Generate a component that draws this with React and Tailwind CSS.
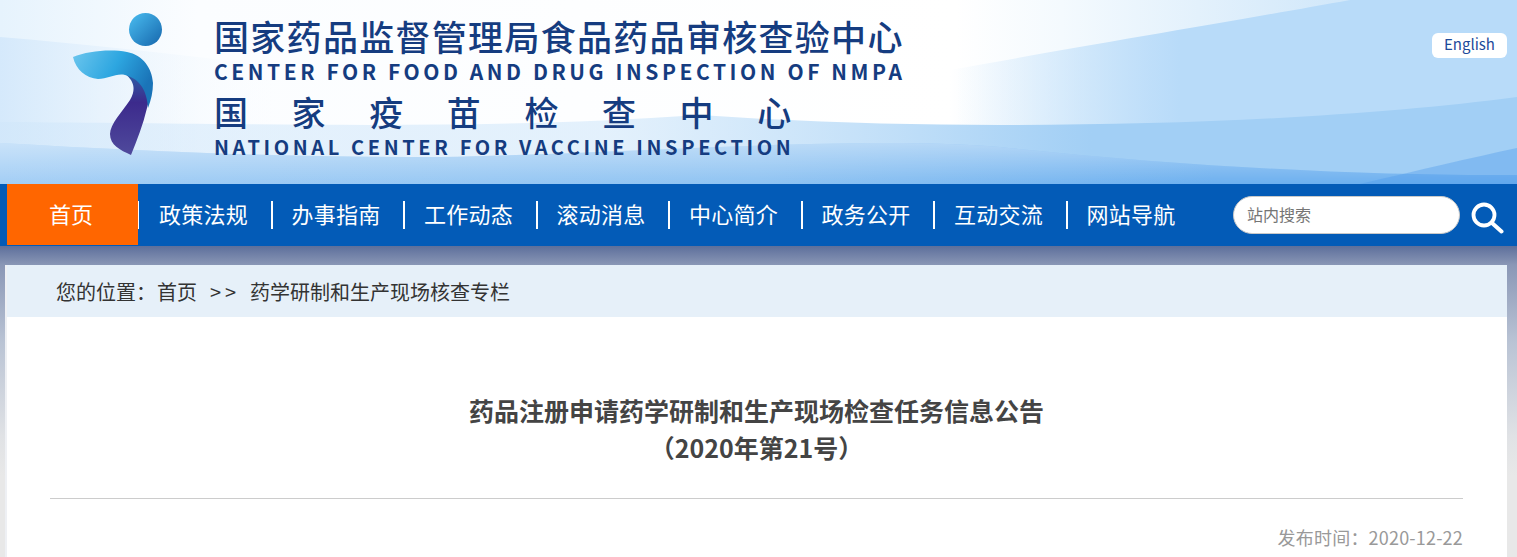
import React from 'react';

const navItems = ['政策法规', '办事指南', '工作动态', '滚动消息', '中心简介', '政务公开', '互动交流', '网站导航'];

const HeaderWaves = () => (
    <svg className="absolute inset-0 h-full w-full" viewBox="0 0 1517 184" preserveAspectRatio="none">
        <defs>
            <linearGradient id="base" x1="0" y1="0" x2="1" y2="0">
                <stop offset="0" stopColor="#e6f3fd" />
                <stop offset="0.13" stopColor="#fbfdff" />
                <stop offset="0.63" stopColor="#ffffff" />
                <stop offset="0.7" stopColor="#f4fafe" />
                <stop offset="0.88" stopColor="#d2e8fa" />
                <stop offset="1" stopColor="#cbe4f9" />
            </linearGradient>
            <linearGradient id="skyRight" gradientUnits="userSpaceOnUse" x1="950" y1="0" x2="1180" y2="0">
                <stop offset="0" stopColor="#b8dbf9" stopOpacity="0" />
                <stop offset="1" stopColor="#b8dbf9" />
            </linearGradient>
            <linearGradient id="leftBand" x1="0" y1="0" x2="1" y2="0">
                <stop offset="0" stopColor="#d3e8fb" />
                <stop offset="0.4" stopColor="#ffffff" stopOpacity="0" />
            </linearGradient>
            <linearGradient id="midBand" x1="0" y1="0" x2="1" y2="0">
                <stop offset="0" stopColor="#cfe6fa" stopOpacity="0.5" />
                <stop offset="0.4" stopColor="#d8ebfb" stopOpacity="0.7" />
                <stop offset="0.72" stopColor="#a2cff5" />
                <stop offset="1" stopColor="#a2cff5" />
            </linearGradient>
            <linearGradient id="lowBand" x1="0" y1="0" x2="1" y2="0">
                <stop offset="0" stopColor="#a3cef5" />
                <stop offset="0.5" stopColor="#8fc3f2" />
                <stop offset="0.8" stopColor="#6db0ef" />
                <stop offset="1" stopColor="#6db0ef" />
            </linearGradient>
            <linearGradient id="lowFade" gradientUnits="userSpaceOnUse" x1="0" y1="135" x2="0" y2="184">
                <stop offset="0" stopColor="#ffffff" stopOpacity="0.5" />
                <stop offset="1" stopColor="#ffffff" stopOpacity="0" />
            </linearGradient>
        </defs>
        <rect width="1517" height="184" fill="url(#base)" />
        <path d="M0 37 C160 50 340 75 560 100 L760 184 L0 184 Z" fill="url(#leftBand)" opacity="0.9" />
        <path d="M950 70 C1060 50 1240 20 1350 0 L1517 0 L1517 184 L950 184 Z" fill="url(#skyRight)" />
        <path d="M0 122 C300 124 480 130 700 115 C800 122 900 125 1000 125 C1200 125 1380 115 1517 97 L1517 184 L0 184 Z" fill="url(#midBand)" />
        <path d="M0 143 C160 152 300 158 440 157 C620 154 860 135 1000 147 C1200 168 1380 176 1517 175 L1517 184 L0 184 Z" fill="url(#lowBand)" />
        <path d="M0 143 C160 152 300 158 440 157 C620 154 860 135 1000 147 C1200 168 1380 176 1517 175 L1517 184 L0 184 Z" fill="url(#lowFade)" />
        <path d="M1360 184 C1420 170 1470 158 1517 148 L1517 184 Z" fill="#4f9bea" opacity="0.4" />
    </svg>
);

const Logo = () => (
    <svg className="mt-[13px] shrink-0" width="92" height="144" viewBox="72 13 92 144">
        <defs>
            <linearGradient id="ball" x1="0.1" y1="0.1" x2="0.9" y2="0.9">
                <stop offset="0" stopColor="#45b5ea" />
                <stop offset="1" stopColor="#1b6fb3" />
            </linearGradient>
            <linearGradient id="ribbon" x1="0" y1="0" x2="1" y2="0.4">
                <stop offset="0" stopColor="#6cc6ee" />
                <stop offset="0.55" stopColor="#2da6e0" />
                <stop offset="1" stopColor="#1a74b8" />
            </linearGradient>
            <linearGradient id="tail" x1="0" y1="0" x2="0" y2="1">
                <stop offset="0" stopColor="#2f5ea6" />
                <stop offset="0.35" stopColor="#3c2a8c" />
                <stop offset="1" stopColor="#4f4a9c" />
            </linearGradient>
        </defs>
        <circle cx="145.5" cy="29.5" r="16.5" fill="url(#ball)" />
        <path d="M125 74 C138 75 147 84 150 96 L147 108 C143 125 137 140 131 155 C120 150 110 145 110 134 C110 124 122 112 130 100 C135 92 136 82 125 74 Z" fill="url(#tail)" />
        <path d="M73 57 C88 51 110 49 127 52 C143 55 152 68 153 83 C153 92 151 100 148 108 C147 92 141 79 125 75 C116 73 108 79 98 79 C86 78 76 70 73 57 Z" fill="url(#ribbon)" />
    </svg>
);

const SearchIcon = () => (
    <svg width="33" height="32" viewBox="0 0 33 32" fill="none" stroke="#ffffff" strokeLinecap="round">
        <circle cx="13" cy="13" r="10.5" strokeWidth="3.8" />
        <path d="M21 21 L30.5 29.5" strokeWidth="4" />
    </svg>
);

const App = () => {
    return (
        <div className="h-[557px] overflow-hidden bg-[#e8e8e8] font-['Noto_Sans_CJK_SC','Noto_Sans',sans-serif]">
            <header className="relative flex h-[184px] pl-[72px]">
                <HeaderWaves />
                <div className="relative flex">
                    <Logo />
                    <div className="ml-[50px] flex w-[700px] flex-col whitespace-nowrap font-medium text-[#153c80]">
                        <div className="mt-[11px] h-[47px] text-[35px] leading-[50px] tracking-[1.3px]">国家药品监督管理局食品药品审核查验中心</div>
                        <div className="h-[26px] text-[21px] font-bold leading-[26px] tracking-[3.55px]">CENTER FOR FOOD AND DRUG INSPECTION OF NMPA</div>
                        <div className="mt-[5px] h-[46px] text-[34px] leading-[46px] tracking-[43.6px]">国家疫苗检查中心</div>
                        <div className="h-[24px] text-[20px] font-bold leading-[24px] tracking-[3.6px]">NATIONAL CENTER FOR VACCINE INSPECTION</div>
                    </div>
                </div>
                <a className="absolute right-[10px] top-[33px] flex h-[25px] w-[75px] items-center justify-center rounded-md bg-white pb-[3px] text-[15px] text-[#1d4a9a]">English</a>
            </header>

            <nav className="flex h-[62px] items-start bg-[#035bb7] pl-[7px]">
                <a className="flex h-[61px] w-[131px] items-center justify-center bg-[#ff6600] pb-[2px] pr-[3px] text-[22px] text-white">首页</a>
                <div className="flex h-[61px] items-center">
                    {navItems.map((item, i) => (
                        <a key={item} className="flex w-[132.5px] items-center whitespace-nowrap text-[22px] tracking-[0.25px] text-white">
                            <span className={i === 0 ? 'h-[28px] w-px bg-white' : 'h-[28px] w-[2px] bg-white'} />
                            <span className={i === 0 ? 'ml-[20px] -translate-y-px' : 'ml-[19px] -translate-y-px'}>{item}</span>
                        </a>
                    ))}
                </div>
                <input
                    className="ml-[35px] mt-[12px] h-[38px] w-[227px] rounded-[19px] border border-[#c9c9c9] bg-white pb-[2px] pl-[13px] text-[16px] outline-none placeholder:text-[#757575]"
                    placeholder="站内搜索"
                />
                <div className="ml-[11px] mt-[18px]">
                    <SearchIcon />
                </div>
            </nav>

            <main className="h-[311px] bg-[linear-gradient(180deg,#5d6f9b_0,#8a97b6_19px,#b9c3d4_95px,#e0e2e5_190px,#e8e8e8_230px)] pl-[5px] pr-[10px] pt-[19px]">
                <div className="h-full border-l-2 border-[#eef0f4] bg-white">
                    <div className="flex h-[52px] items-center whitespace-nowrap bg-[#e6f0f9] pl-[49px] pt-px text-[20px] text-[#333333]">
                        <span>您的位置：</span>
                        <a className="ml-px">首页</a>
                        <span className="ml-[13px] w-[40px] tracking-[4px]">{'>>'}</span>
                        <span>药学研制和生产现场核查专栏</span>
                    </div>
                    <div className="pl-[43px] pr-[44px]">
                        <h1 className="mt-[75px] text-center text-[25px] font-bold leading-[37px] text-[#444444]">
                            <div>药品注册申请药学研制和生产现场检查任务信息公告</div>
                            <div>（2020年第21号）</div>
                        </h1>
                        <div className="mt-[32px] h-px bg-[#cccccc]" />
                        <div className="mt-[23px] text-right text-[18px] leading-[30px] tracking-[0.2px] text-[#999999]">发布时间：2020-12-22</div>
                    </div>
                </div>
            </main>
        </div>
    );
};

export default App;
